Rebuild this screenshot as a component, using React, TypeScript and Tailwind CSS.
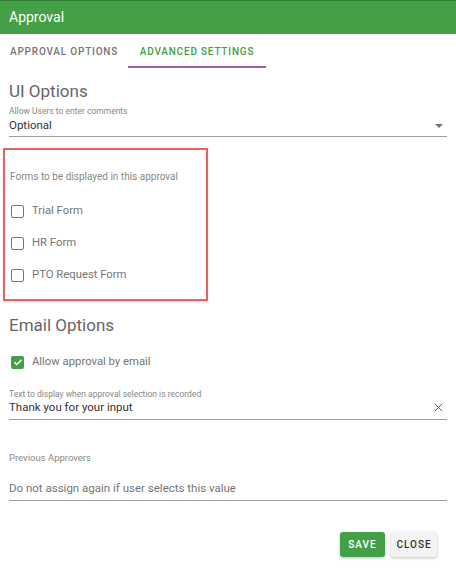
import * as React from 'react';

const Box: React.FC<{ checked?: boolean }> = ({ checked }) =>
  checked ? (
    <span className="flex h-[13px] w-[13px] items-center justify-center rounded-[2px] bg-[#43a047]">
      <svg viewBox="0 0 24 24" className="h-[12px] w-[12px]" fill="none" stroke="#fff" strokeWidth="3.2">
        <path d="M5 12.5l4.5 4.5L19 7.5" />
      </svg>
    </span>
  ) : (
    <span className="block h-[13px] w-[13px] rounded-[2px] border-[1.6px] border-[#757575]" />
  );

const Check: React.FC<{ label: string; checked?: boolean }> = ({ label, checked }) => (
  <div className="flex h-[32px] items-center gap-[8px] pl-[6px]">
    <Box checked={checked} />
    <span className="text-[11.3px] text-[#757575]">{label}</span>
  </div>
);

export default function App() {
  return (
    <div className="h-[573px] w-[456px] overflow-hidden bg-white font-['Roboto',sans-serif]">
      {/* header */}
      <div className="flex h-[34px] items-center border-t border-[#2e7d32] bg-[#43a047] pl-[9px] text-[14px] text-white">
        Approval
      </div>

      {/* tabs */}
      <div className="flex h-[34px] whitespace-nowrap text-[10px] font-medium tracking-[0.8px]">
        <div className="flex w-[128px] items-end pb-[9px] pl-[10px] text-[#757575]">APPROVAL OPTIONS</div>
        <div className="flex w-[138px] items-end justify-center border-b-2 border-[#9b5db5] pb-[7px] text-[#43a047]">
          ADVANCED SETTINGS
        </div>
      </div>

      <div className="px-[9px]">
        <div className="mt-[13px] text-[17px] leading-[20px] text-[#666]">UI Options</div>
        <div className="mt-[5px] text-[8.5px] leading-[11px] text-[#888]">Allow Users to enter comments</div>
        <div className="flex h-[20px] items-center justify-between border-b border-[#9e9e9e] pb-[2px] text-[11.5px] text-[#333]">
          <span>Optional</span>
          <svg viewBox="0 0 10 5" className="mr-[4px] h-[4px] w-[8px]">
            <path d="M0 0h10L5 5z" fill="#757575" />
          </svg>
        </div>
      </div>

      {/* highlighted forms block */}
      <div className="ml-[3px] mt-[11px] h-[153px] w-[205px] border-2 border-[#e06666] pt-[21px] shadow-[0_1px_2px_rgba(0,0,0,0.15)]">
        <div className="pl-[5px] text-[10px] leading-[12px] text-[#888]">Forms to be displayed in this approval</div>
        <div className="mt-[12px]">
          <Check label="Trial Form" />
          <Check label="HR Form" />
          <Check label="PTO Request Form" />
        </div>
      </div>

      <div className="px-[9px]">
        <div className="mt-[14px] text-[17px] leading-[20px] text-[#666]">Email Options</div>
        <div className="-ml-[9px] mt-[11px]">
          <div className="flex h-[32px] items-center gap-[8px] pl-[11px]">
            <Box checked />
            <span className="text-[11.3px] text-[#757575]">Allow approval by email</span>
          </div>
        </div>
        <div className="mt-[11px] text-[8.5px] leading-[10px] text-[#888]">Text to display when approval selection is recorded</div>
        <div className="flex h-[21px] items-center justify-between border-b border-[#9e9e9e] pb-[3px] text-[11.5px] text-[#333]">
          <span>Thank you for your input</span>
          <svg viewBox="0 0 24 24" className="mr-[3px] h-[11px] w-[11px]" fill="none" stroke="#555" strokeWidth="2">
            <path d="M4 4l16 16M20 4L4 20" />
          </svg>
        </div>

        <div className="mt-[32px] text-[9.5px] leading-[12px] text-[#888]">Previous Approvers</div>
        <div className="flex h-[37px] items-end border-b border-[#9e9e9e] pb-[4px] text-[11.5px] leading-[16px] text-[#757575]">
          Do not assign again if user selects this value
        </div>

        <div className="mt-[31px] flex justify-end gap-[6px] pr-[10px]">
          <button className="h-[25px] w-[45px] rounded-[3px] bg-[#43a047] text-[10px] font-medium tracking-[1px] text-white shadow-[0_1px_3px_rgba(0,0,0,0.25)]">
            SAVE
          </button>
          <button className="h-[25px] w-[46px] rounded-[3px] bg-[#f3f3f3] text-[10px] font-medium tracking-[1px] text-[#333] shadow-[0_1px_3px_rgba(0,0,0,0.25)]">
            CLOSE
          </button>
        </div>
      </div>
    </div>
  );
}
